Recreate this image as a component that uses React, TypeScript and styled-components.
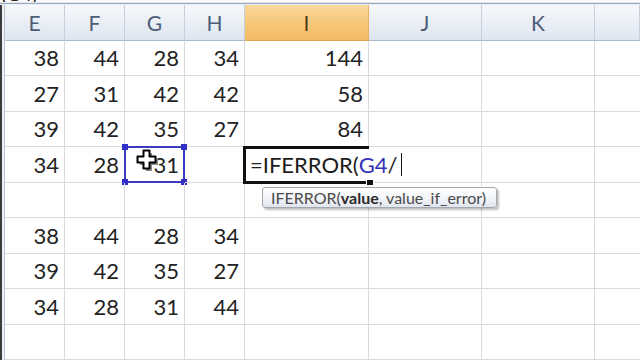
import React from 'react'
import styled, { createGlobalStyle } from 'styled-components'

const GlobalStyle = createGlobalStyle`
  html, body {
    margin: 0;
    padding: 0;
    background: #ffffff;
    overflow: hidden;
  }
  body {
    font-family: Lato, "Open Sans", "Liberation Sans", sans-serif;
  }
`

const GRID = '#d9dbde'

//page frame
const Page = styled.div`
  width: 640px;
  height: 360px;
  overflow: hidden;
  display: flex;
  flex-direction: column;
  background: #ffffff;
`

//formula bar, only its bottom edge shows
const FormulaStrip = styled.div`
  height: 9px;
  display: flex;
  align-items: flex-end;
  overflow: hidden;
  background: #fbfbfb;
  border-bottom: 1px solid #e3e6ea;

  span {
    font-size: 20px;
    line-height: 20px;
    margin-bottom: -1px;
    padding-left: 1px;
    color: #222;
  }
`

const Divider = styled.div`
  height: 3px;
  border-top: 1px solid #9aabc2;
  background: linear-gradient(#dfe6ef, #f4f7fb);
`

//sheet grid
const Sheet = styled.div`
  display: grid;
  grid-template-columns: 5px 60px 60px 60px 60px 124px 113px 113px 1fr;
  grid-template-rows: 36px repeat(9, 35.5px);
  flex: 1;
`

const Gutter = styled.div`
  border-left: 2px solid #3b3b3b;
  border-right: 1px solid #b9c3cf;
  background: #eef1f5;
`

type HeadProps = { $active?: boolean }

const HeadCell = styled.div<HeadProps>`
  display: flex;
  align-items: center;
  justify-content: center;
  font-size: 21px;
  color: ${({ $active }) => ($active ? '#4f3d1c' : '#4c5d78')};
  background: ${({ $active }) =>
    $active
      ? 'linear-gradient(#f9d89d, #f6c677 55%, #f3bb63)'
      : 'linear-gradient(#f6f8fb, #e9eef5 55%, #dfe6f0)'};
  border-right: 1px solid ${({ $active }) => ($active ? '#e9b061' : '#c6d0dd')};
  border-bottom: 1px solid ${({ $active }) => ($active ? '#e0a54f' : '#a9bbd0')};
`

type CellProps = { $last?: boolean }

const Cell = styled.div<CellProps>`
  position: relative;
  display: flex;
  align-items: center;
  justify-content: flex-end;
  padding-right: 5px;
  font-size: 22px;
  color: #222222;
  border-right: ${({ $last }) => ($last ? 'none' : `1px solid ${GRID}`)};
  border-bottom: 1px solid ${GRID};
`

//blue selection around G4
const Selection = styled.div`
  position: absolute;
  inset: -1px -1px -1px -1px;
  border: 2px solid #3b3bbf;
  pointer-events: none;
`

type HandleProps = { $x: 'left' | 'right'; $y: 'top' | 'bottom' }

const Handle = styled.div<HandleProps>`
  position: absolute;
  width: 6px;
  height: 6px;
  background: #3030c4;
  ${({ $x }) => $x}: -4px;
  ${({ $y }) => $y}: -4px;
`

const Cursor = styled.svg`
  position: absolute;
  left: 11px;
  top: 2px;
`

//active cell in edit mode
const EditBox = styled.div`
  position: absolute;
  top: -1px;
  left: -2px;
  right: -1px;
  bottom: -2px;
  border: 3px solid #111111;
  border-right: none;
  z-index: 2;
`

const EditText = styled.div`
  position: absolute;
  top: 0;
  bottom: 0;
  left: 1px;
  padding: 0 4px 0 3px;
  display: flex;
  align-items: center;
  white-space: nowrap;
  background: #ffffff;
  font-size: 22px;
  color: #1c1c1c;
`

const Ref = styled.span`
  color: #3232b4;
`

const Caret = styled.span`
  display: inline-block;
  width: 1.5px;
  height: 23px;
  margin-left: 3px;
  background: #111111;
`

const FillHandle = styled.div`
  position: absolute;
  right: -5px;
  bottom: -5px;
  width: 6px;
  height: 5px;
  background: #111111;
  border: 1px solid #ffffff;
`

const Tip = styled.div`
  position: absolute;
  left: 17px;
  top: 40px;
  height: 19px;
  padding: 0 10px 0 8px;
  display: flex;
  align-items: center;
  white-space: nowrap;
  font-size: 16px;
  color: #4a4a4a;
  background: linear-gradient(#ffffff, #f3f5f9 50%, #e2e6ee);
  border: 1px solid #a3a8b0;
  border-radius: 3px;
  box-shadow: 2px 2px 2px rgba(0, 0, 0, 0.25);
  z-index: 3;

  b {
    color: #2a2a2a;
  }
`

const columns = ['E', 'F', 'G', 'H', 'I', 'J', 'K', '']

const rows: (number | null)[][] = [
  [38, 44, 28, 34, 144],
  [27, 31, 42, 42, 58],
  [39, 42, 35, 27, 84],
  [34, 28, 31, null, null],
  [],
  [38, 44, 28, 34],
  [39, 42, 35, 27],
  [34, 28, 31, 44],
  [],
]

const MoveCursor = () => (
  <Cursor width="24" height="23" viewBox="0 0 24 23">
    <path
      d="M8 2h6v6h6v6h-6v6H8v-6H2V8h6z"
      fill="#8a8a8a"
      transform="translate(2 2)"
    />
    <path
      d="M7.5 1.5h6v6h6v6h-6v6h-6v-6h-6v-6h6z"
      fill="#ffffff"
      stroke="#000000"
      strokeWidth="2"
      strokeLinejoin="round"
    />
  </Cursor>
)

const SelectedCell = ({ value }: { value: number }) => (
  <Cell>
    {value}
    <Selection>
      <Handle $x="left" $y="top" />
      <Handle $x="right" $y="top" />
      <Handle $x="left" $y="bottom" />
      <Handle $x="right" $y="bottom" />
    </Selection>
    <MoveCursor />
  </Cell>
)

const EditingCell = () => (
  <Cell>
    <EditBox>
      <EditText>
        =IFERROR(<Ref>G4</Ref>/<Caret />
      </EditText>
      <FillHandle />
    </EditBox>
    <Tip>
      IFERROR(<b>value</b>, value_if_error)
    </Tip>
  </Cell>
)

export default function App() {
  return (
    <>
      <GlobalStyle />
      <Page>
        <FormulaStrip>
          <span>(G4)</span>
        </FormulaStrip>
        <Divider />
        <Sheet>
          <Gutter />
          {columns.map((c, i) => (
            <HeadCell key={i} $active={c === 'I'}>
              {c}
            </HeadCell>
          ))}
          {rows.map((row, r) => (
            <React.Fragment key={r}>
              <Gutter />
              {columns.map((_, c) => {
                if (r === 3 && c === 2) return <SelectedCell key={c} value={31} />
                if (r === 3 && c === 4) return <EditingCell key={c} />
                const v = row[c]
                return (
                  <Cell key={c} $last={c === columns.length - 1}>
                    {v ?? ''}
                  </Cell>
                )
              })}
            </React.Fragment>
          ))}
        </Sheet>
      </Page>
    </>
  )
}
